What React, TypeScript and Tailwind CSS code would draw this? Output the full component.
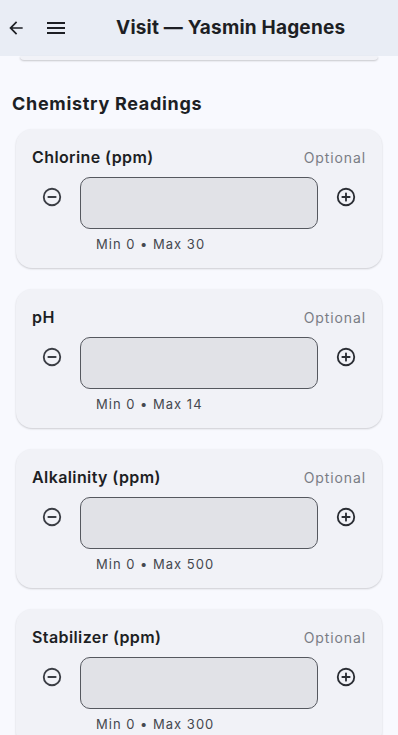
import React from 'react';

const readings = [
  { label: 'Chlorine (ppm)', min: 0, max: 30 },
  { label: 'pH', min: 0, max: 14 },
  { label: 'Alkalinity (ppm)', min: 0, max: 500 },
  { label: 'Stabilizer (ppm)', min: 0, max: 300 },
];

function MinusCircle() {
  return (
    <svg width="22" height="22" viewBox="0 0 24 24" fill="none" stroke="#3a3d44" strokeWidth="2">
      <circle cx="12" cy="12" r="9" />
      <path d="M8 12h8" strokeLinecap="round" />
    </svg>
  );
}

function PlusCircle() {
  return (
    <svg width="22" height="22" viewBox="0 0 24 24" fill="none" stroke="#2a2d33" strokeWidth="2">
      <circle cx="12" cy="12" r="9" />
      <path d="M8 12h8M12 8v8" strokeLinecap="round" />
    </svg>
  );
}

function ReadingCard({ label, min, max }: { label: string; min: number; max: number }) {
  return (
    <div className="rounded-2xl bg-[#f1f2f7] px-4 pt-[18px] pb-4 shadow-[0_1px_2px_rgba(0,0,0,0.18)]">
      <div className="flex items-center justify-between h-5">
        <span className="text-[16px] font-semibold text-[#1d1f24] tracking-[0.4px]">{label}</span>
        <span className="text-[14px] text-[#7a7d85] tracking-[0.9px]">Optional</span>
      </div>
      <div className="mt-[10px] flex items-start gap-2">
        <button className="w-10 h-10 flex items-center justify-center">
          <MinusCircle />
        </button>
        <div className="flex-1 h-[52px] rounded-[10px] border border-[#55585f] bg-[#e1e2e7]" />
        <button className="w-10 h-10 flex items-center justify-center">
          <PlusCircle />
        </button>
      </div>
      <div className="mt-[7px] pl-16 text-[13px] text-[#45484f] tracking-[1px] leading-4">
        Min {min} • Max {max}
      </div>
    </div>
  );
}

export default function App() {
  return (
    <div className="h-[735px] overflow-hidden bg-[#f8f9fe] font-['Inter',sans-serif]">
      <header className="h-14 bg-[#e9edf5] flex items-center">
        <button className="ml-[6px] w-5 h-6 flex items-center justify-center">
          <svg width="20" height="20" viewBox="0 0 24 24" fill="#1d1f24">
            <path d="M20 11H7.83l5.59-5.59L12 4l-8 8 8 8 1.41-1.41L7.83 13H20v-2z" />
          </svg>
        </button>
        <button className="ml-[18px] w-6 h-6 flex items-center justify-center">
          <svg width="24" height="24" viewBox="0 0 24 24" fill="#1d1f24">
            <path d="M3 18h18v-2H3v2zm0-5h18v-2H3v2zm0-7v2h18V6H3z" />
          </svg>
        </button>
        <h1 className="ml-[48px] text-[19px] font-bold text-[#1d1f24] tracking-[0.2px]">Visit — Yasmin Hagenes</h1>
      </header>
      <div className="mx-5 h-1 rounded-b-2xl bg-[#f1f2f7] shadow-[0_1px_2px_rgba(0,0,0,0.2)]" />
      <h2 className="mt-[32px] px-3 text-[18px] font-bold text-[#1d1f24] leading-6 tracking-[0.7px]">Chemistry Readings</h2>
      <div className="mt-[13px] px-4 flex flex-col gap-[21px] pb-6">
        {readings.map((r) => (
          <ReadingCard key={r.label} {...r} />
        ))}
      </div>
    </div>
  );
}
